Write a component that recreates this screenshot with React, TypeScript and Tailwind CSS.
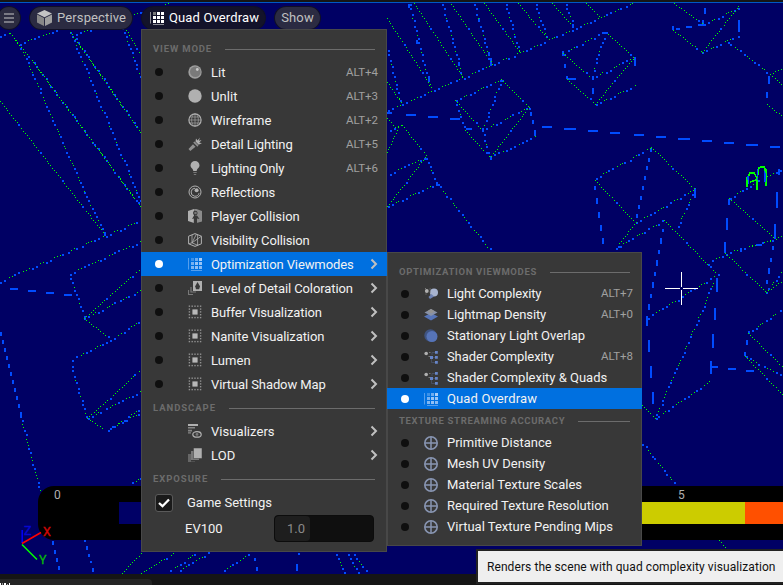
import React from "react";

type Seg = [number, number, number, number];

/* Fine green-dotted triangle edges */
const greenEdges: Seg[] = [
  [10, 33, 19, 45], [10, 33, 33, 62], [0, 101, 105, 235], [70, 32, 141, 133], [33, 62, 97, 148], [97, 148, 141, 207],
  [122, 22, 141, 55], [84, 318, 141, 268], [84, 318, 110, 339], [87, 418, 141, 369], [87, 418, 104, 429],
  [122, 573, 141, 553], [141, 573, 175, 552], [387, 18, 432, 88], [414, 3, 463, 77], [451, 4, 491, 62],
  [484, 3, 519, 51], [518, 3, 547, 38], [552, 3, 574, 28], [387, 82, 402, 104],
  [501, 79, 529, 107], [455, 100, 482, 130], [529, 107, 490, 157], [465, 130, 490, 157],
  [387, 118, 395, 127], [387, 152, 399, 125], [402, 125, 426, 155], [387, 206, 425, 157],
  [563, 53, 591, 78], [567, 79, 595, 104], [586, 3, 600, 17], [608, 34, 634, 57], [595, 104, 634, 57],
  [674, 3, 703, 24], [673, 30, 702, 52], [702, 52, 739, 5], [770, 74, 783, 68], [770, 74, 783, 85], [767, 104, 783, 117],
  [651, 147, 694, 188], [595, 180, 635, 222], [636, 222, 615, 248], [664, 220, 716, 273], [729, 198, 776, 239],
  [776, 239, 783, 234], [725, 253, 766, 292], [766, 292, 783, 280], [642, 405, 655, 418],
  [748, 333, 783, 367], [745, 356, 783, 395], [719, 540, 726, 549],
];

/* Edges that alternate between blue blocks and green dots */
const mixedEdges: Seg[] = [
  [0, 35, 10, 33], [19, 43, 66, 27], [75, 34, 141, 12], [141, 12, 169, 3], [33, 62, 141, 207], [75, 38, 141, 133],
  [0, 281, 105, 235], [105, 235, 141, 220], [69, 273, 141, 241], [84, 318, 141, 290], [72, 359, 110, 340], [110, 340, 141, 320],
  [87, 418, 141, 391], [108, 429, 141, 412], [110, 428, 141, 408], [20, 415, 41, 495], [127, 485, 141, 478],
  [167, 573, 195, 553], [175, 573, 209, 552], [219, 573, 251, 553], [336, 553, 344, 573], [354, 553, 367, 573],
  [388, 110, 463, 77], [463, 77, 575, 28], [575, 28, 633, 3], [455, 100, 501, 79], [482, 130, 529, 107],
  [389, 173, 425, 157], [387, 206, 437, 183], [437, 183, 490, 250], [389, 129, 402, 125], [563, 53, 601, 33],
  [591, 78, 634, 57], [595, 104, 637, 84], [703, 24, 739, 7], [702, 52, 738, 35], [727, 41, 770, 74],
  [595, 178, 651, 147], [636, 222, 694, 189], [694, 190, 677, 228], [615, 248, 664, 220],
  [729, 198, 745, 188], [745, 188, 783, 168], [740, 249, 776, 239], [648, 317, 716, 275], [708, 263, 725, 253], [725, 253, 771, 240],
  [766, 292, 783, 269], [717, 274, 655, 418], [655, 418, 710, 381], [783, 308, 748, 333], [745, 356, 783, 376],
  [642, 443, 676, 485], [19, 43, 85, 193],
];

/* Mostly blue blocks */
const blueEdges: Seg[] = [
  [70, 32, 137, 193], [122, 27, 141, 80], [84, 192, 104, 232], [136, 192, 141, 203], [69, 273, 84, 318], [71, 366, 87, 418],
  [348, 553, 358, 573], [455, 100, 465, 130], [501, 79, 482, 130], [490, 157, 535, 136], [482, 130, 490, 157], [425, 157, 437, 182],
  [603, 37, 591, 78], [505, 3, 519, 51], [535, 3, 547, 40], [565, 3, 574, 27], [387, 50, 401, 104], [474, 4, 491, 64],
  [409, 4, 430, 88], [442, 4, 461, 72],
];

/* x, y, width, height of the long dashes */
const dashes: Seg[] = [
  [10, 288, 8, 2], [28, 290, 8, 2], [46, 292, 8, 2], [64, 294, 8, 2],
  [385, 112, 7, 2], [406, 114, 10, 2], [428, 116, 10, 2], [450, 118, 10, 2], [466, 128, 6, 2], [542, 126, 10, 2], [564, 128, 12, 2],
  [588, 130, 10, 2], [610, 132, 10, 2], [634, 134, 10, 2], [656, 136, 10, 2], [678, 138, 12, 2], [702, 140, 10, 2],
  [724, 142, 10, 2], [746, 144, 12, 2], [770, 146, 10, 2], [602, 32, 6, 2], [567, 78, 9, 2], [634, 57, 2, 9],
  [0, 332, 2, 4], [2, 340, 2, 4], [4, 348, 2, 4], [6, 356, 2, 4], [8, 364, 2, 4], [10, 372, 2, 4], [12, 380, 2, 4], [14, 388, 2, 4], [16, 396, 2, 4], [18, 404, 2, 4], [20, 412, 2, 4],
  [52, 541, 2, 4], [54, 550, 2, 4], [56, 558, 2, 4], [58, 566, 2, 4], [84, 540, 2, 2], [86, 546, 2, 4], [88, 554, 2, 3], [90, 561, 2, 2], [92, 568, 2, 4],
  [254, 558, 2, 3], [256, 567, 2, 4], [298, 553, 2, 2], [296, 564, 2, 7],
  [408, 4, 2, 4], [416, 40, 2, 4], [428, 76, 2, 4], [458, 62, 2, 4], [478, 18, 2, 4], [488, 52, 2, 4], [490, 60, 2, 5],
  [529, 108, 2, 2], [530, 112, 2, 4], [532, 120, 2, 4], [534, 130, 2, 6], [562, 51, 2, 5], [564, 64, 2, 4], [566, 76, 2, 3], [592, 88, 2, 6],
  [704, 8, 2, 6], [702, 20, 2, 5], [672, 26, 2, 4], [676, 28, 4, 2], [686, 26, 6, 2], [698, 24, 6, 2], [738, 20, 2, 12],
  [768, 76, 2, 8], [766, 92, 2, 6], [650, 148, 2, 4], [648, 158, 2, 4], [646, 166, 2, 4], [644, 176, 2, 4], [642, 186, 2, 4], [640, 196, 2, 4], [638, 205, 2, 4], [636, 214, 2, 4],
  [594, 186, 2, 4], [596, 198, 2, 6], [598, 212, 2, 6], [600, 225, 2, 6], [602, 238, 2, 6], [694, 188, 2, 10], [662, 229, 2, 3], [660, 238, 2, 6],
  [660, 240, 2, 4], [658, 250, 2, 4], [656, 260, 2, 6], [654, 272, 2, 4], [652, 282, 2, 6], [650, 294, 2, 4], [648, 304, 2, 6], [646, 316, 2, 10],
  [648, 340, 2, 12], [650, 366, 2, 12], [652, 392, 2, 12],
  [728, 199, 2, 6], [726, 218, 2, 12], [724, 242, 2, 11], [776, 192, 2, 16], [774, 224, 2, 15], [778, 169, 2, 6], [772, 246, 2, 4], [770, 258, 2, 4], [768, 268, 2, 6], [766, 280, 2, 4],
  [716, 280, 2, 12], [714, 308, 2, 12], [712, 334, 2, 14], [710, 361, 2, 13], [711, 366, 7, 2], [728, 368, 8, 2], [746, 370, 8, 2],
  [748, 331, 2, 3], [746, 340, 2, 5], [744, 352, 2, 4],
];

const block = (x: number, y: number) => `M${Math.round(x / 2) * 2} ${Math.round(y / 2) * 2}h2v2h-2z`;
const dot = (x: number, y: number) => `M${Math.round(x)} ${Math.round(y)}h1v1h-1z`;

function trace([x1, y1, x2, y2]: Seg, pattern: string) {
  const length = Math.hypot(x2 - x1, y2 - y1);
  let green = "";
  let blue = "";
  let t = 0;
  for (let i = 0; t < length; i++) {
    const x = x1 + ((x2 - x1) * t) / length;
    const y = y1 + ((y2 - y1) * t) / length;
    if (pattern[i % pattern.length] === "b") {
      blue += block(x, y);
      t += 4.8;
    } else {
      green += dot(x, y);
      t += 3;
    }
  }
  return { green, blue };
}

const traced = [
  ...greenEdges.map((s) => trace(s, "ggggggggggb")),
  ...mixedEdges.map((s) => trace(s, "bbggbbggg")),
  ...blueEdges.map((s) => trace(s, "bbbg")),
];
const greenPath = traced.map((t) => t.green).join("");
const bluePath = traced.map((t) => t.blue).join("") + dashes.map(([x, y, w, h]) => `M${x} ${y}h${w}v${h}h${-w}z`).join("");

function Scene() {
  return (
    <svg className="absolute inset-0" width="783" height="585" shapeRendering="crispEdges">
      <path d={bluePath} fill="#004cff" />
      <path d={greenPath} fill="#00ff00" />
      <g fill="none" strokeWidth="1.5">
        <path d="M747 187V178L750 173H754L757 178V190M757 180L759 168L762 166.500H764L766 170V186M750 182L756 180" stroke="#00ff00" />
        <path d="M757.500 169V186M765 171V182M748 176V184" stroke="#004cff" />
        <path d="M748.500 176L750 173H754L757 178M759 168L762 167H764L766 173M747 186V180M757 190V180" stroke="#00ff00" />
      </g>
      <path d="M665 288h15v1h-15zM683 288h15v1h-15zM681 272h1v15h-1zM681 290h1v15h-1z" fill="#fff" />
    </svg>
  );
}

function AxisGizmo() {
  return (
    <svg className="absolute left-0 top-[520px]" width="60" height="50" fontFamily="Roboto, sans-serif" fontSize="12.500">
      <path d="M22.200 23V10" stroke="#0000ff" strokeWidth="1.500" />
      <path d="M22 23.500L41 12.500" stroke="#ff0000" strokeWidth="1.500" />
      <path d="M22 24.500L37 39.500" stroke="#00ff00" strokeWidth="1.500" />
      <text x="24" y="14.500" fill="#0707d0" stroke="#0707d0" strokeWidth=".3">Z</text>
      <text x="43" y="16.300" fill="#d00707" stroke="#d00707" strokeWidth=".4">X</text>
      <text x="39" y="44.300" fill="#07b807" stroke="#07b807" strokeWidth=".3">Y</text>
    </svg>
  );
}

type IconName =
  | "lit" | "unlit" | "wire" | "torch" | "bulb" | "reflect" | "player" | "visibility" | "grid" | "lodColor"
  | "buffer" | "visualizer" | "lod" | "lightCx" | "density" | "overlap" | "shader" | "globe";

const A = "#b0b0b0";
const B = "#787878";

const bufferDots: [number, number][] = [];
for (let i = 0; i < 5; i++) {
  bufferDots.push([0.7 + i * 2.8, 0.5], [0.7 + i * 2.8, 11.9]);
  if (i > 0 && i < 4) bufferDots.push([0.7, 0.6 + i * 2.8], [11.9, 0.6 + i * 2.8]);
}

const gridCells: [number, number, number][] = [
  [3, 1, 0.35], [7, 1, 0.65], [11, 1, 1],
  [3, 5, 0.7], [7, 5, 0.9], [11, 5, 0.9],
  [3, 9, 0.75], [7, 9, 0.85], [11, 9, 0.8],
];

const icons: Record<IconName, React.ReactNode> = {
  lit: (<><circle cx="7" cy="7" r="6.700" fill={A} opacity=".85" /><circle cx="7.300" cy="6.800" r="5.300" fill="#7a7a7a" /><circle cx="9.300" cy="4.500" r="1.400" fill="#c8c8c8" /></>),
  unlit: <circle cx="7" cy="7" r="6.700" fill={A} />,
  wire: (<g fill="none" stroke={A}><circle cx="7" cy="7" r="6.100" strokeWidth="1.200" /><g strokeWidth=".8" opacity=".8"><ellipse cx="7" cy="7" rx="3.400" ry="6" /><path d="M7 1v12M1 7h12M2 4h10M2 10h10" /></g></g>),
  torch: (<><path d="M.5 12L5 7.200l2.500 2.500L2.300 14zM5.200 5.500l4.300 4.200 1-1.500-3.800-3.800z" fill="#909090" /><path d="M7.500 4.500L8 1.500l1.500 2L12 .5l-1.200 3.300L13.500 3l-2.300 2.800 2.800.2-3.300 1.800z" fill={A} /></>),
  bulb: (<><path d="M7 0a4.500 4.500 0 0 0-4.500 4.500C2.500 7 5.300 7.600 5.300 10h3.400c0-2.400 2.800-3 2.800-5.500A4.500 4.500 0 0 0 7 0z" fill={A} /><path d="M5.300 11h3.400v1H5.300zM5.800 13h2.400v1H5.800z" fill={B} /></>),
  reflect: (<><circle cx="7" cy="7" r="6" fill="none" stroke={A} strokeWidth="1" /><path d="M7 3.200a4 4 0 1 0 4 5" fill="none" stroke={A} strokeWidth="1" /><circle cx="8.600" cy="5.300" r="2" fill={A} /></>),
  player: (<><path d="M0 2L6 0v14l-6-2z" fill={A} /><path d="M6 0h2.500L14 2v10.500L8.500 14z" fill="#8a8a8a" /><circle cx="7.300" cy="4" r="2.300" fill="#383838" /><path d="M4 10l2-3.500h3L11.500 10 9 9.500V14H5.800V9.500z" fill="#383838" /><circle cx="7.500" cy="4" r="1.300" fill={B} /></>),
  visibility: (<g fill="none" stroke={A} strokeWidth="1"><path d="M7 .6l6.400 2.600v7.600L7 13.400.6 10.800V3.200z" /><path d="M8.500 1L4 9.800l-3.400 1M4 2v7.800L13.400 3.200M9.600 1.600v10.700L4 9.800" strokeWidth=".8" /></g>),
  grid: (<>{gridCells.map(([x, y, o]) => <rect key={`${x}-${y}`} x={x} y={y} width="3" height="3" opacity={o} fill="currentColor" />)}<path d="M.5 1v11.500M3 13.500h11" stroke="currentColor" strokeWidth="1" opacity=".5" /></>),
  lodColor: (<><path d="M5 0h9v10H5z" fill={A} /><path d="M9.500 1L7.200 5.200 8 8.300h3.200l.8-3.100z" fill="#383838" /><path d="M.5 9v4.500H5M3 6v5h5" fill="none" stroke={B} strokeWidth="1.200" /></>),
  buffer: (<>{bufferDots.map(([x, y]) => <rect key={`${x}-${y}`} x={x} y={y} width="1.400" height="1.400" fill="#929292" />)}<rect x="4.400" y="4.400" width="5.200" height="5.200" fill="#b8b8b8" /></>),
  visualizer: (<><path d="M0 0h10v2H0z" fill={A} /><path d="M0 3h7v1.600H0zM0 5.800h4v1.600H0zM0 8.300h3v1.200H0z" fill="#858585" /><ellipse cx="9" cy="10.400" rx="4.200" ry="2.800" fill="none" stroke={A} strokeWidth="1.200" /><circle cx="9" cy="10.400" r="1.400" fill={B} /></>),
  lod: (<><path d="M0 6h3v7.500h4V14H0z" fill="#666" /><path d="M3 3h8v9H3z" fill={B} /><path d="M5.500 0H14v10.500H5.500z" fill={A} stroke="#383838" strokeWidth=".5" /></>),
  lightCx: (<><circle cx="2.800" cy="4" r="1.900" fill={A} /><circle cx="10" cy="5.500" r="4" fill="#a8b4cf" /><path d="M4.500 10l3-3 2.500 2.500L6 12z" fill="#6f83b5" /><path d="M1 1.500h1M5.500 2h1.300M5.500 5h1.300M1.500 7h1" stroke={B} /></>),
  density: (<><path d="M0 8.500L7 5l7 3.500L7 12.500z" fill="#5674b8" /><path d="M.5 4.500L7 1l6.500 3.500L7 8z" fill="#8791a8" /><path d="M3 3.500L7 1l4 2.500-4 2z" fill="#939393" /></>),
  overlap: (<><circle cx="6.500" cy="6.500" r="6.200" fill="#3f5482" /><circle cx="8" cy="7.500" r="5.500" fill="#5674b8" /></>),
  shader: (<><circle cx="2.200" cy="3.500" r="1.800" fill={A} /><path d="M5 2h1.500v1H5zM4.500 6H6v1H4.500z" fill={B} /><path d="M6 6h3v3H6zM11 1h2.800v2.800H11zM11 6h2.800v2.800H11zM11 11h2.800v2.800H11z" fill="#6785c8" /><path d="M9 7.500h2M7.500 9v3.500H11M8 5V2.500h3" fill="none" stroke="#4b566c" strokeWidth=".8" /></>),
  globe: (<g fill="none" stroke="#8895b2" strokeWidth="1.600"><circle cx="7" cy="7" r="6.200" /><path d="M7 1v12M1 7h12" strokeWidth="1.500" /></g>),
};

function Icon({ name }: { name: IconName }) {
  return <svg className="h-3.5 w-3.5 shrink-0 text-[#a9cdf8]" viewBox="0 0 14 14">{icons[name]}</svg>;
}

function Chevron() {
  return (
    <svg className="h-3 w-2 shrink-0" viewBox="0 0 8 12">
      <path d="M1.500 1.500L6 6l-4.500 4.500" fill="none" stroke="#c0c0c0" strokeWidth="2" />
    </svg>
  );
}

type Item = { icon: IconName; label: string; keys?: string; sub?: boolean; active?: boolean; noDot?: boolean; spacing?: string };

const loose = "tracking-[0.05px]";
const wide = "tracking-[0.13px]";
const tight = "tracking-[-0.15px]";
const snug = "tracking-[-0.1px]";

const viewModes: Item[] = [
  { icon: "lit", label: "Lit", keys: "ALT+4", spacing: loose },
  { icon: "unlit", label: "Unlit", keys: "ALT+3", spacing: loose },
  { icon: "wire", label: "Wireframe", keys: "ALT+2", spacing: loose },
  { icon: "torch", label: "Detail Lighting", keys: "ALT+5" },
  { icon: "bulb", label: "Lighting Only", keys: "ALT+6", spacing: tight },
  { icon: "reflect", label: "Reflections" },
  { icon: "player", label: "Player Collision", spacing: "tracking-[0px]" },
  { icon: "visibility", label: "Visibility Collision", spacing: tight },
  { icon: "grid", label: "Optimization Viewmodes", sub: true, active: true, spacing: snug },
  { icon: "lodColor", label: "Level of Detail Coloration", sub: true, spacing: snug },
  { icon: "buffer", label: "Buffer Visualization", sub: true, spacing: snug },
  { icon: "buffer", label: "Nanite Visualization", sub: true, spacing: snug },
  { icon: "buffer", label: "Lumen", sub: true, spacing: loose },
  { icon: "buffer", label: "Virtual Shadow Map", sub: true, spacing: snug },
];
const landscape: Item[] = [
  { icon: "visualizer", label: "Visualizers", sub: true, noDot: true, spacing: loose },
  { icon: "lod", label: "LOD", sub: true, noDot: true, spacing: wide },
];
const optimization: Item[] = [
  { icon: "lightCx", label: "Light Complexity", keys: "ALT+7", spacing: tight },
  { icon: "density", label: "Lightmap Density", keys: "ALT+0", spacing: snug },
  { icon: "overlap", label: "Stationary Light Overlap" },
  { icon: "shader", label: "Shader Complexity", keys: "ALT+8", spacing: snug },
  { icon: "shader", label: "Shader Complexity & Quads" },
  { icon: "grid", label: "Quad Overdraw", active: true, spacing: wide },
];
const streaming: Item[] = ["Primitive Distance", "Mesh UV Density", "Material Texture Scales", "Required Texture Resolution", "Virtual Texture Pending Mips"].map(
  (label) => ({ icon: "globe", label }),
);

function Heading({ text, className }: { text: string; className: string }) {
  return (
    <div className={`flex items-center gap-[13px] pl-[11px] pr-[11px] pt-0.5 ${className}`}>
      <span className="whitespace-nowrap text-[9.5px] font-bold text-[#6c6c6c]">{text}</span>
      <span className="h-px flex-1 bg-[#6c6c6c]" />
    </div>
  );
}

function Row({ item, compact }: { item: Item; compact?: boolean }) {
  const spacing = item.spacing ?? (compact ? "tracking-[0px]" : "tracking-[-0.08px]");
  return (
    <div className={`-mx-px flex items-center whitespace-nowrap pl-3.5 pr-[9px] ${compact ? "h-[21px]" : "h-6"} ${item.active ? "bg-[#0070e0]" : ""}`}>
      <span className={`h-2 w-2 shrink-0 rounded-full ${compact ? "mr-[15px]" : "mr-[25px]"} ${item.noDot ? "" : item.active ? "bg-white" : "bg-[#0f0f0f]"}`} />
      <Icon name={item.icon} />
      <span className={`ml-[9px] flex-1 text-[13px] text-[#f2f2f2] ${spacing} ${compact ? "" : "pt-0.5"}`}>{item.label}</span>
      {item.keys && <span className={`text-[11.5px] text-[#a0a0a0] ${compact ? "" : "pt-0.5"}`}>{item.keys}</span>}
      {item.sub && <Chevron />}
    </div>
  );
}

function ViewModeMenu() {
  return (
    <div className="absolute left-[141px] top-[29px] h-[523px] w-[246px] border border-[#484848] bg-[#383838] pt-1.5">
      <Heading text="VIEW MODE" className="h-6 tracking-[0.85px]" />
      {viewModes.map((item) => <Row key={item.label} item={item} />)}
      <Heading text="LANDSCAPE" className="h-[23px] tracking-[0.95px]" />
      {landscape.map((item) => <Row key={item.label} item={item} />)}
      <Heading text="EXPOSURE" className="h-[23px] tracking-[0.95px]" />
      <div className="flex h-[25px] items-center pl-[13px]">
        <span className="flex h-[18px] w-[18px] items-center justify-center rounded-[3px] border border-[#5a5a5a] bg-[#1a1a1a]">
          <svg width="12" height="10" viewBox="0 0 12 10"><path d="M1 5l3.500 3.200L11 1.500" fill="none" stroke="#fff" strokeWidth="2.300" /></svg>
        </span>
        <span className="ml-3.5 text-[13px] text-[#f2f2f2]">Game Settings</span>
      </div>
      <div className="flex h-[27px] items-center justify-between pl-[43px] pr-3">
        <span className="text-[13px] text-[#f2f2f2]">EV100</span>
        <span className="flex h-[27px] w-[100px] overflow-hidden rounded-[4px] border border-[#0c0c0c] bg-[#0f0f0f]">
          <span className="flex w-[35px] items-center rounded bg-[#1e1e1e] pl-3 text-[13px] text-[#8a8a8a]">1.0</span>
        </span>
      </div>
    </div>
  );
}

function OptimizationMenu() {
  return (
    <div className="absolute left-[387px] top-[252px] h-[294px] w-[255px] border border-[#484848] bg-[#383838] pt-[7px]">
      <Heading text="OPTIMIZATION VIEWMODES" className="h-[23px] tracking-[0.67px]" />
      {optimization.map((item) => <Row key={item.label} item={item} compact />)}
      <Heading text="TEXTURE STREAMING ACCURACY" className="h-[23px] tracking-[0.67px]" />
      {streaming.map((item) => <Row key={item.label} item={item} compact />)}
    </div>
  );
}

const pill = "flex h-[22px] items-center rounded-full text-[13px] tracking-[0.13px] shadow-[0_0_0_1px_#101026]";

function Toolbar() {
  return (
    <div className="relative flex items-center pt-1">
      <div className={`${pill} -ml-0.5 w-[22px] justify-center bg-[#2b2b40]`}>
        <svg width="12" height="12"><path d="M1 2h10M1 6h10M1 10h10" stroke="#c8c8c8" strokeWidth="1.200" /></svg>
      </div>
      <div className={`${pill} ml-2.5 w-[102px] bg-[#2b2b42] pl-[7px] text-[#c0c0c0]`}>
        <svg className="mr-[5px]" width="15" height="16" viewBox="0 0 15 16">
          <path d="M7.500 0L15 3.500 7.500 7.200 0 3.500z" fill="#c4c4c4" /><path d="M0 4.500l7 3.400V16l-7-3.500z" fill="#888" /><path d="M15 4.500L8 7.900V16l7-3.500z" fill="#a0a0a0" />
        </svg>
        Perspective
      </div>
      <div className={`${pill} ml-2.5 w-[123px] bg-[#13132a] pl-2 text-white`}>
        <svg className="mr-[5px] text-white" width="14" height="14" viewBox="0 0 14 14">
          <path d="M3 1h3v3H3z" fill="#777" />
          <path d="M7 1h3v3H7zM11 1h3v3h-3zM3 5h3v3H3zM7 5h3v3H7zM11 5h3v3h-3zM3 9h3v3H3zM7 9h3v3H7zM11 9h3v3h-3z" fill="#fff" />
          <path d="M.5 1v11.500M3 13.500h11" stroke="#8c8c94" />
        </svg>
        Quad Overdraw
      </div>
      <div className={`${pill} ml-2.5 w-[45px] justify-center bg-[#2b2b42] text-[#c0c0c0]`}>Show</div>
    </div>
  );
}

function Legend() {
  return (
    <div className="absolute left-[38px] top-[486px] flex h-[54px] w-[745px] flex-col rounded-l-[16px] bg-black text-[12px] text-[#b0b0b0]">
      <div className="flex h-4 items-center">
        <span className="w-[625px] pl-4 pt-0.5">0</span>
        <span className="pl-[15px] pt-0.5">5</span>
      </div>
      <div className="flex h-[22px] pl-[81px]">
        <div className="w-[523px] bg-[#000066]" />
        <div className="w-[103px] bg-[#cccc00]" />
        <div className="flex-1 bg-[#ff5000]" />
      </div>
    </div>
  );
}

export default function App() {
  return (
    <div className="relative flex h-[585px] w-[783px] flex-col overflow-hidden bg-[#000064] font-[Roboto,sans-serif]">
      <Scene />
      <div className="relative h-[3px] shrink-0 border-b border-[#0058c4] bg-[#151515]" />
      <Toolbar />
      <Legend />
      <AxisGizmo />
      <div className="relative mt-auto h-[11px] bg-[#151515] pt-[5px]">
        <div className="flex h-1.5 w-[152px] items-end gap-px rounded-tr bg-[#242424]">
          <span className="h-0.5 w-px bg-white" /><span className="h-0.5 w-px bg-[#999]" /><span className="h-0.5 w-0.5 bg-white" /><span className="h-px w-px bg-[#aaa]" /><span className="h-0.5 w-px bg-white" />
        </div>
      </div>
      <ViewModeMenu />
      <OptimizationMenu />
      <div className="absolute left-[476px] top-[549px] flex h-[35px] w-[310px] items-center whitespace-nowrap border-2 border-[#222] bg-[#efefef] pl-[9px] text-[12px] tracking-[0.08px] text-[#111]">
        Renders the scene with quad complexity visualization
      </div>
    </div>
  );
}
